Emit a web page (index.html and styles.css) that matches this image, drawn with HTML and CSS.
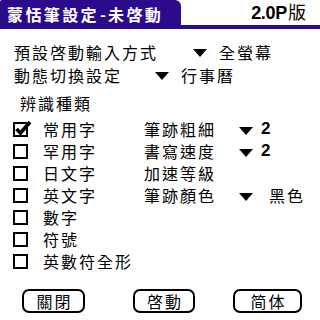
FILE: index.html
```html
<!DOCTYPE html>
<html>
<head>
<meta charset="utf-8">
<link rel="stylesheet" href="styles.css">
</head>
<body>
<div class="screen">
  <div class="header">
    <div class="tab">蒙恬筆設定<span class="dash">-</span>未啓動</div>
    <div class="rest"><span class="ver"><b>2.0P</b>版</span></div>
  </div>
  <div class="row r1">
    <span class="lbl l1">預設啓動輸入方式</span>
    <span class="tri"></span>
    <span class="val">全螢幕</span>
  </div>
  <div class="row r2">
    <span class="lbl l2">動態切換設定</span>
    <span class="tri"></span>
    <span class="val">行事曆</span>
  </div>
  <div class="group">辨識種類</div>
  <div class="grid">
    <span class="cb checked"><svg width="20" height="18" viewBox="0 0 20 18"><rect x="1" y="4" width="13" height="13" fill="none" stroke="#000" stroke-width="2"/><path d="M3.5 10 L7.5 14 L17 3" fill="none" stroke="#000" stroke-width="3.6" stroke-linejoin="miter"/></svg></span>
    <span class="name">常用字</span>
    <span class="opt">筆跡粗細</span>
    <span class="tri"></span>
    <span class="num">2</span>

    <span class="cb"><i></i></span>
    <span class="name">罕用字</span>
    <span class="opt">書寫速度</span>
    <span class="tri"></span>
    <span class="num">2</span>

    <span class="cb"><i></i></span>
    <span class="name">日文字</span>
    <span class="opt">加速等級</span>
    <span></span>
    <span></span>

    <span class="cb"><i></i></span>
    <span class="name">英文字</span>
    <span class="opt">筆跡顏色</span>
    <span class="tri"></span>
    <span class="cval">黑色</span>

    <span class="cb"><i></i></span>
    <span class="name">數字</span>
    <span></span><span></span><span></span>

    <span class="cb"><i></i></span>
    <span class="name">符號</span>
    <span></span><span></span><span></span>

    <span class="cb"><i></i></span>
    <span class="name wide">英數符全形</span>
  </div>
  <div class="buttons">
    <span class="btn b1">關閉</span>
    <span class="btn b2">啓動</span>
    <span class="btn b3">简体</span>
  </div>
</div>
</body>
</html>
```
FILE: styles.css
```css
* { box-sizing: border-box; }
html, body { margin: 0; padding: 0; background: #fff; }
body {
  font-family: "Noto Sans CJK TC", "Noto Sans CJK SC", sans-serif;
  font-size: 16px;
  color: #000;
}
.screen { width: 320px; height: 320px; overflow: hidden; display: flex; flex-direction: column; }
.header { display: flex; height: 29px; }
.tab {
  width: 181px;
  height: 29px;
  background: #2b0b8c;
  color: #fff;
  font-weight: bold;
  font-size: 16px;
  letter-spacing: 2.4px;
  line-height: 29px;
  padding-left: 7px;
  border-top-right-radius: 6px;
  border-top-left-radius: 2px;
  white-space: nowrap;
}
.tab .dash { display: inline-block; width: 9px; letter-spacing: 0; padding-left: 1px; }
.rest {
  flex: 1;
  border-bottom: 4px solid #2b0b8c;
  display: flex;
  justify-content: flex-end;
  padding-right: 14px;
}
.ver {
  font-family: "Liberation Sans", "Noto Sans CJK TC", sans-serif;
  font-size: 18px;
  line-height: 28px;
  height: 25px;
  margin-top: -1px;
}
.ver b { font-weight: bold; letter-spacing: -0.3px; margin-right: 1px; }
.row {
  display: flex;
  align-items: center;
  height: 23px;
  padding-left: 14px;
  letter-spacing: 2px;
  white-space: nowrap;
}
.r1 { margin-top: 11px; }
.l1 { width: 179px; }
.l2 { width: 141px; }
.tri {
  display: inline-block;
  width: 0; height: 0;
  border-left: 7px solid transparent;
  border-right: 7px solid transparent;
  border-top: 8px solid #000;
  margin-top: 3px;
  margin-right: 12px;
}
.group {
  height: 23px;
  margin-top: 6px;
  line-height: 23px;
  padding-left: 20px;
  letter-spacing: 2px;
}
.grid {
  margin-top: 3px;
  display: grid;
  grid-template-columns: 29px 102px 95px 22px 1fr;
  grid-auto-rows: 22px;
  align-items: center;
  padding-left: 13px;
  letter-spacing: 2px;
  white-space: nowrap;
}
.name { padding-left: 1px; }
.opt { padding-left: 0; }
.cb { display: flex; align-items: center; height: 22px; }
.cb i {
  display: block;
  width: 15px; height: 15px;
  border: 2px solid #000;
}
.cb svg { display: block; margin-top: -3px; }
.grid .tri { margin-right: 0; }
.num {
  font-family: "Liberation Sans", sans-serif;
  font-weight: bold;
  font-size: 17px;
}
.cval { padding-left: 8px; }
.wide { grid-column: 2 / 5; }
.buttons {
  margin-top: 17px;
  display: flex;
  height: 24px;
  padding-left: 22px;
}
.btn {
  display: flex;
  align-items: center;
  justify-content: center;
  height: 24px;
  border: 2px solid #000;
  border-radius: 7px;
  letter-spacing: 2px;
  padding-left: 2px;
}
.b1 { width: 63px; }
.b2 { width: 62px; margin-left: 48px; }
.b3 { width: 69px; margin-left: 38px; }
```
